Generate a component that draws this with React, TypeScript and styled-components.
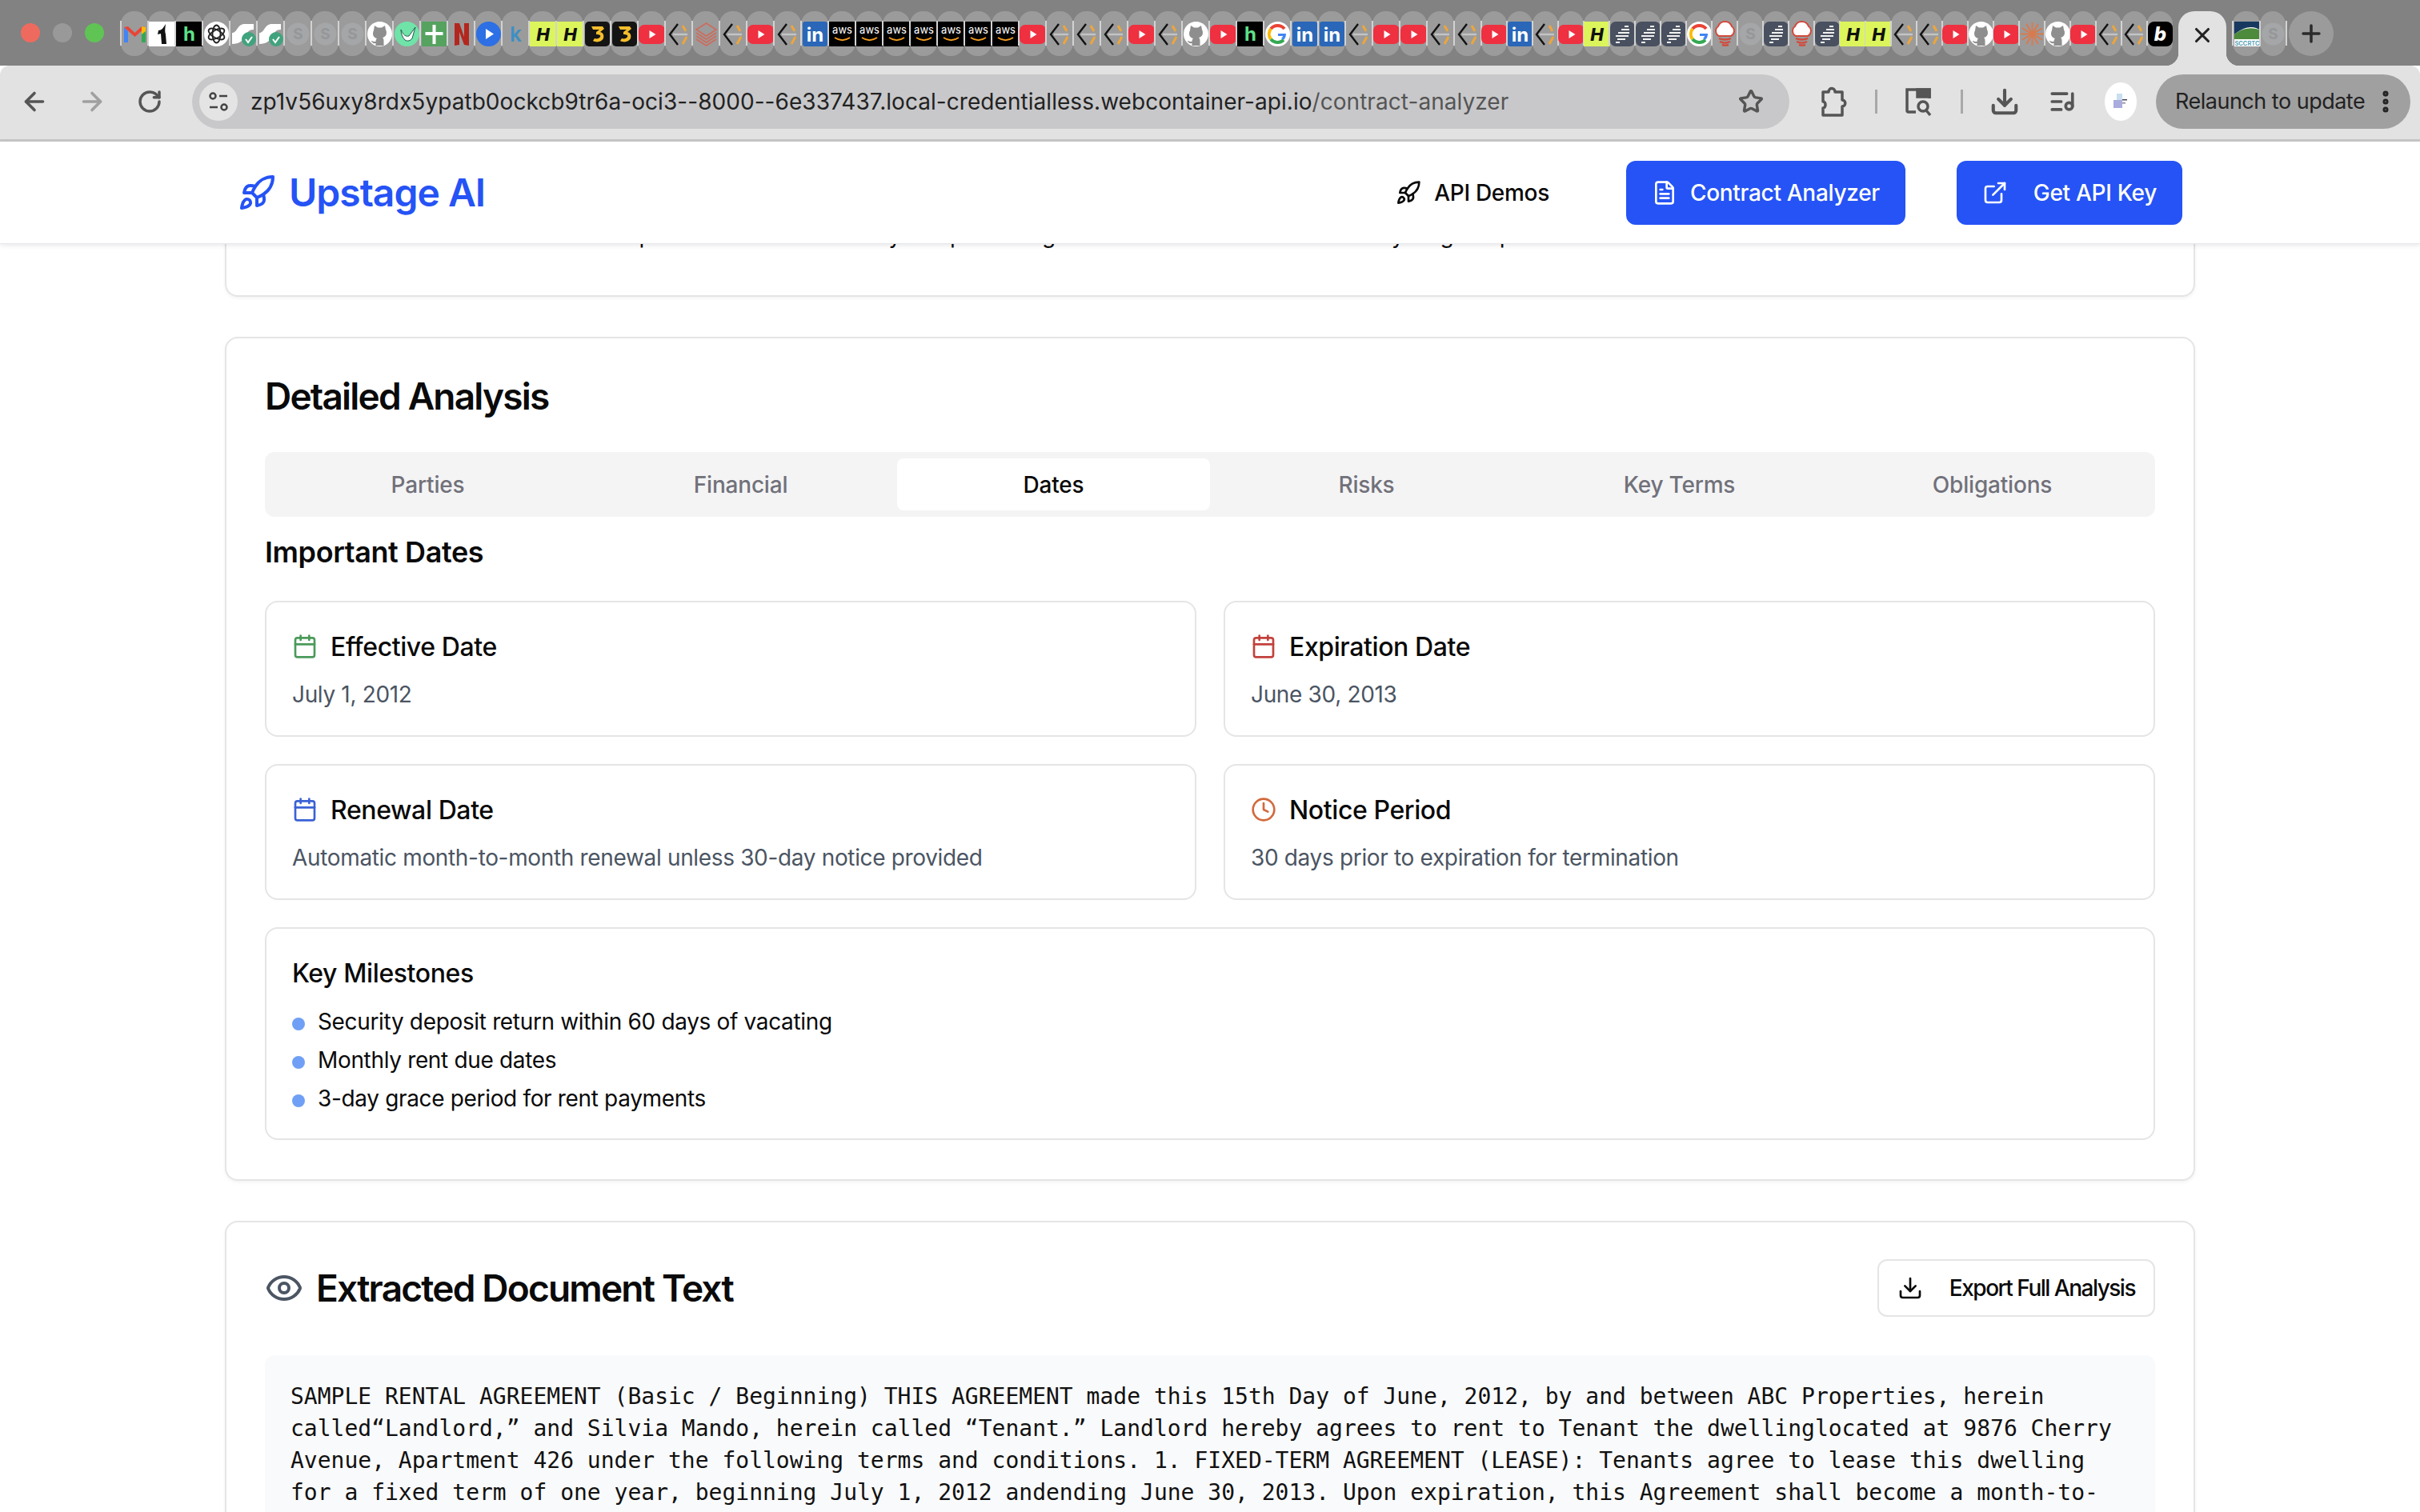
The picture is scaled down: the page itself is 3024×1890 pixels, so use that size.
import React from 'react';
import styled, { createGlobalStyle } from 'styled-components';
import { ArrowLeft, ArrowRight, Calendar, Clock, Download, ExternalLink, Eye, FileText, ListMusic, MoreVertical, Plus, Rocket, RotateCw, Star, X } from 'lucide-react';

const GlobalStyle = createGlobalStyle`
  html, body { margin: 0; padding: 0; background: #fff; }
  body { font-family: Inter, "Liberation Sans", sans-serif; color: #0a0a0a; }
  * { box-sizing: border-box; }
`;

const Page = styled.div`
  width: 3024px;
  height: 1890px;
  overflow: hidden;
`;

/* browser chrome */
const TabStrip = styled.div`
  height: 82px;
  background: #828282;
  display: flex;
  align-items: flex-start;
  padding-top: 14px;
`;

const Lights = styled.div`
  width: 151px;
  flex: none;
  display: flex;
  gap: 16px;
  padding: 15px 0 0 26px;
`;

const Light = styled.span<{ $c: string }>`
  width: 24px;
  height: 24px;
  border-radius: 50%;
  background: ${p => p.$c};
`;

const Slot = styled.div<{ $w: number }>`
  width: ${p => p.$w}px;
  height: 56px;
  flex: none;
  position: relative;
  background: #9b9b9b;
  border-radius: 16px;
  display: flex;
  align-items: center;
  justify-content: center;
  &::before {
    content: '';
    position: absolute;
    left: -1px;
    top: 12px;
    width: 2px;
    height: 31px;
    background: #d2d2d2;
  }
  svg { display: block; flex: none; overflow: visible; position: relative; }
`;

const ActiveTab = styled.div`
  width: 60px;
  height: 68px;
  flex: none;
  margin: 0 8px 0 7px;
  background: #e2e2e2;
  border-radius: 20px 20px 0 0;
  position: relative;
  display: flex;
  align-items: flex-start;
  justify-content: center;
  padding-top: 15px;
  color: #222;
  &::before, &::after {
    content: '';
    position: absolute;
    bottom: 0;
    width: 16px;
    height: 16px;
  }
  &::before { left: -16px; background: radial-gradient(circle at 0 0, transparent 16px, #e2e2e2 16.5px); }
  &::after { right: -16px; background: radial-gradient(circle at 100% 0, transparent 16px, #e2e2e2 16.5px); }
`;

const StripSep = styled.span`
  width: 2px;
  height: 31px;
  margin: 12px 2px 0 0;
  background: #d2d2d2;
  flex: none;
`;

const NewTab = styled.div`
  width: 56px;
  height: 56px;
  flex: none;
  border-radius: 50%;
  background: #9b9b9b;
  color: #2b2b2b;
  display: flex;
  align-items: center;
  justify-content: center;
`;

const Toolbar = styled.div`
  height: 95px;
  background: #e2e2e2;
  border-bottom: 3px solid #c6c6c6;
  border-radius: 12px 12px 0 0;
  display: flex;
  align-items: center;
  padding: 0 12px 3px 7px;
`;

const IconBtn = styled.div<{ $c?: string }>`
  width: 72px;
  height: 68px;
  flex: none;
  display: flex;
  align-items: center;
  justify-content: center;
  color: ${p => p.$c || '#555'};
`;

const Omnibox = styled.div`
  width: 1996px;
  height: 68px;
  flex: none;
  margin: 0 19px 0 17px;
  padding: 0 32px 0 9px;
  border-radius: 34px;
  background: #c8c8ca;
  display: flex;
  align-items: center;
  color: #555;
`;

const SiteChip = styled.div`
  width: 48px;
  height: 48px;
  flex: none;
  border-radius: 50%;
  background: #e4e4e4;
  display: flex;
  align-items: center;
  justify-content: center;
  margin-right: 16px;
`;

const Url = styled.div`
  flex: 1;
  font-size: 28px;
  letter-spacing: 0.05px;
  color: #222;
  white-space: nowrap;
  span { color: #555; }
`;

const ToolSep = styled.span`
  width: 3px;
  height: 30px;
  flex: none;
  margin: 0 16px;
  background: #a8a8a8;
`;

const Avatar = styled.div`
  width: 40px;
  height: 48px;
  flex: none;
  margin: 0 24px 0 17px;
  border-radius: 50%;
  background: #fff;
  display: flex;
  align-items: center;
  justify-content: center;
`;

const Relaunch = styled.div`
  width: 318px;
  height: 68px;
  flex: none;
  border-radius: 34px;
  background: #a0a0a0;
  color: #222;
  font-size: 27px;
  letter-spacing: -0.5px;
  display: flex;
  align-items: center;
  justify-content: space-between;
  padding: 0 14px 0 24px;
  white-space: nowrap;
`;

/* app nav */
const Nav = styled.header`
  height: 128px;
  position: relative;
  z-index: 5;
  background: #fff;
  border-bottom: 1px solid #e5e7eb;
  box-shadow: 0 2px 6px rgba(0, 0, 0, 0.09);
`;

const NavInner = styled.div`
  width: 2462px;
  height: 100%;
  margin: 0 auto;
  padding: 0 16px;
  display: flex;
  align-items: center;
  justify-content: space-between;
`;

const Brand = styled.div`
  display: flex;
  align-items: center;
  gap: 16px;
  font-size: 48px;
  font-weight: 600;
  color: #2553f5;
  letter-spacing: -1px;
`;

const NavLinks = styled.nav`
  display: flex;
  align-items: center;
  gap: 64px;
`;

const NavButton = styled.div<{ $primary?: boolean; $gap: number }>`
  height: 80px;
  padding: 0 32px;
  border-radius: 12px;
  display: flex;
  align-items: center;
  gap: ${p => p.$gap}px;
  font-size: 28px;
  font-weight: 500;
  letter-spacing: -0.3px;
  background: ${p => (p.$primary ? '#2553f5' : 'transparent')};
  color: ${p => (p.$primary ? '#fff' : '#0a0a0a')};
`;

/* page content */
const Main = styled.main`
  width: 2462px;
  margin: 0 auto;
  display: flex;
  flex-direction: column;
  gap: 50px;
`;

const Card = styled.section`
  background: #fff;
  border: 2px solid #e5e5e5;
  border-radius: 16px;
  padding: 46px 48px 49px;
  box-shadow: 0 2px 4px rgba(0, 0, 0, 0.05);
`;

const StubCard = styled(Card)`
  height: 110px;
  margin-top: -44px;
  border-top: none;
  border-radius: 0 0 16px 16px;
  padding: 0 48px;
  overflow: hidden;
`;

const StubText = styled.p`
  margin: 13px 0 0;
  font-size: 28px;
  line-height: 40px;
  letter-spacing: -0.3px;
  white-space: nowrap;
`;

const CardTitle = styled.h2`
  margin: 0;
  height: 52px;
  font-size: 46px;
  line-height: 52px;
  font-weight: 600;
  letter-spacing: -1.8px;
`;

const TabsList = styled.div`
  margin-top: 44px;
  height: 81px;
  padding: 8px;
  border-radius: 12px;
  background: #f4f4f5;
  display: grid;
  grid-template-columns: repeat(6, 1fr);
`;

const TabItem = styled.div<{ $active?: boolean }>`
  display: flex;
  align-items: center;
  justify-content: center;
  font-size: 28px;
  font-weight: 500;
  letter-spacing: -0.2px;
  border-radius: 8px;
  color: ${p => (p.$active ? '#0a0a0a' : '#71717a')};
  background: ${p => (p.$active ? '#fff' : 'transparent')};
`;

const SectionTitle = styled.h3`
  margin: 22px 0 39px;
  font-size: 36px;
  line-height: 44px;
  font-weight: 600;
  letter-spacing: -0.4px;
`;

const DateGrid = styled.div`
  display: grid;
  grid-template-columns: 1fr 1fr;
  gap: 34px;
`;

const InfoCard = styled.div`
  border: 2px solid #e5e5e5;
  border-radius: 16px;
  padding: 33px 32px 31px;
`;

const MilestoneCard = styled(InfoCard)`
  grid-column: 1 / -1;
  padding: 34px 32px 30px;
`;

const InfoHead = styled.div`
  display: flex;
  align-items: center;
  gap: 16px;
  height: 44px;
  font-size: 32px;
  font-weight: 500;
  letter-spacing: -0.4px;
`;

const InfoText = styled.p`
  margin: 18px 0 0;
  font-size: 28px;
  line-height: 40px;
  letter-spacing: -0.34px;
  color: #4b5563;
`;

const MilestoneTitle = styled.div`
  height: 44px;
  line-height: 44px;
  font-size: 32px;
  font-weight: 500;
  letter-spacing: -0.4px;
`;

const MilestoneList = styled.ul`
  margin: 18px 0 0;
  padding: 0;
  list-style: none;
  display: flex;
  flex-direction: column;
  gap: 8px;
`;

const Milestone = styled.li`
  display: flex;
  align-items: center;
  gap: 16px;
  height: 40px;
  font-size: 28px;
  letter-spacing: -0.34px;
  &::before {
    content: '';
    width: 16px;
    height: 16px;
    margin-top: 6px;
    border-radius: 50%;
    background: #70a0f5;
  }
`;

const ExtractHead = styled.div`
  display: flex;
  align-items: center;
  justify-content: space-between;
`;

const ExtractTitle = styled(CardTitle)`
  display: flex;
  align-items: center;
  gap: 16px;
  svg { color: #4b5563; }
`;

const ExportButton = styled.div`
  height: 72px;
  padding: 0 23px;
  border: 2px solid #e5e5e5;
  border-radius: 12px;
  display: flex;
  align-items: center;
  gap: 33px;
  font-size: 28px;
  font-weight: 500;
  letter-spacing: -1.5px;
`;

const DocBox = styled.div`
  margin-top: 48px;
  padding: 32px;
  border-radius: 12px;
  background: #f9fafb;
  font-family: "DejaVu Sans Mono", "Liberation Mono", monospace;
  font-size: 28px;
  line-height: 40px;
  white-space: pre-wrap;
  color: #111;
`;

type Kind = 'gmail' | 'fw' | 'hblack' | 'openai' | 'vue' | 'grayS' | 'github' | 'bird' | 'plus' | 'netflix' | 'play' | 'k' | 'H' | 'crown' | 'yt' | 'br' | 'layers' | 'in' | 'aws' | 'G' | 'stack' | 'chef' | 'burst' | 'b' | 'scc';

const repeat = (k: Kind, n: number): Kind[] => Array(n).fill(k);

const tabs: Kind[] = [
  'gmail', 'fw', 'hblack', 'openai', 'vue', 'vue', ...repeat('grayS', 3), 'github', 'bird', 'plus', 'netflix', 'play', 'k', 'H', 'H', 'crown', 'crown',
  'yt', 'br', 'layers', 'br', 'yt', 'br', 'in', ...repeat('aws', 7), 'yt', 'br', 'br', 'br', 'yt', 'br', 'github', 'yt', 'hblack', 'G', 'in', 'in',
  'br', 'yt', 'yt', 'br', 'br', 'yt', 'in', 'br', 'yt', 'H', ...repeat('stack', 3), 'G', 'chef', 'grayS', 'stack', 'chef', 'stack', 'H', 'H', 'br', 'br',
  'yt', 'github', 'yt', 'burst', 'github', 'yt', 'br', 'br', 'b',
];

const Favicon = ({ kind }: { kind: Kind }) => {
  const svg = (body: React.ReactNode) => <svg width="31" height="31" viewBox="0 0 31 31">{body}</svg>;
  switch (kind) {
    case 'gmail':
      return svg(<>
        <path d="M2 7v19h5V12z" fill="#4285f4" />
        <path d="M29 7v19h-5V12z" fill="#34a853" />
        <path d="M2 7l5-1 8.500 8L24 6l5 1-13.500 12z" fill="#ea4335" />
        <path d="M24 6l5 1v5l-5 4z" fill="#fbbc04" />
      </>);
    case 'fw':
      return svg(<>
        <rect x="-1" width="33" height="31" fill="#fff" />
        <path d="M20 3c-1 8-1 9 0 13l1 12h-6l-1-13-4 1 1-5c4 0 6-3 9-8z" fill="#111" />
      </>);
    case 'hblack':
      return svg(<>
        <rect x="-1" width="33" height="31" fill="#000" />
        <text x="15.500" y="24" textAnchor="middle" fontFamily="Inter" fontSize="24" fontWeight="700" fill="#5ee08a">h</text>
      </>);
    case 'openai':
      return svg(<>
        <circle cx="15.500" cy="15.500" r="15.500" fill="#fff" />
        <g fill="none" stroke="#222" strokeWidth="1.800">
          <ellipse cx="15.500" cy="15.500" rx="5" ry="11" />
          <ellipse cx="15.500" cy="15.500" rx="5" ry="11" transform="rotate(60 15.500 15.500)" />
          <ellipse cx="15.500" cy="15.500" rx="5" ry="11" transform="rotate(120 15.500 15.500)" />
        </g>
      </>);
    case 'vue':
      return svg(<>
        <path d="M1 28V14c7 0 6-11 16-11h11v7c-7 0-9 5-12 10-2 4-6 8-15 8z" fill="#fff" />
        <circle cx="22" cy="22" r="9" fill="#41a37e" />
        <path d="M18 22l3 4 5-7" fill="none" stroke="#fff" strokeWidth="2" />
      </>);
    case 'grayS':
      return svg(<>
        <circle cx="15.500" cy="15.500" r="14" fill="#a4a6a8" />
        <text x="15.500" y="22" textAnchor="middle" fontFamily="Inter" fontSize="19" fontWeight="700" fill="#959799">S</text>
      </>);
    case 'github':
      return svg(<>
        <circle cx="15.500" cy="15.500" r="15.500" fill="#fff" />
        <path d="M9 5l4 2.500h5L22 5l1 5c2 4 1 9-4 10 1 1 1.500 2 1.500 4v6h-10v-3c-3 .5-4.500-.5-6-3 2 0 3 1.500 6 1 0-2 .5-3 1.500-4-5-1-6-6-4-10z" fill="#8e8e8e" />
      </>);
    case 'bird':
      return svg(<>
        <circle cx="15.500" cy="15.500" r="15.500" fill="#6fe3a8" />
        <path d="M8 10c3 7 6 9 10 8l8-11-4 14c-2 3-6 4-9 2-3-3-5-8-5-13z" fill="#fff" stroke="#24574a" strokeWidth="1" />
      </>);
    case 'plus':
      return svg(<>
        <rect width="31" height="31" fill="#55a35f" />
        <path d="M13.500 4h4v9h9v4h-9v11h-4V17h-9v-4h9z" fill="#fff" />
      </>);
    case 'netflix':
      return svg(<path d="M7 2h6l6 17V2h6v28l-6-1-6-16v16l-6 1z" fill="#b3261e" />);
    case 'play':
      return svg(<>
        <circle cx="15.500" cy="15.500" r="15.500" fill="#2d6fe4" />
        <path d="M12 9l10 6.500L12 22z" fill="#fff" />
      </>);
    case 'k':
      return svg(<text x="15.500" y="25" textAnchor="middle" fontFamily="Inter" fontSize="26" fontWeight="600" fill="#3d8fc4">k</text>);
    case 'H':
      return svg(<>
        <rect x="-1" width="33" height="31" fill="#dcf55c" />
        <text x="15.500" y="24" textAnchor="middle" fontFamily="Inter" fontSize="22" fontWeight="800" fontStyle="italic" fill="#111">H</text>
      </>);
    case 'crown':
      return svg(<>
        <rect width="31" height="31" rx="5" fill="#141414" />
        <path d="M8 6h14l2 3-5 4c4 1 5 4 4 8-2 4-8 6-13 3l2-3c3 1 6 0 7-2s-1-3-5-3v-3l4-3H10z" fill="#f4be2c" />
      </>);
    case 'yt':
      return svg(<>
        <rect x="-1" y="4" width="33" height="24" rx="7" fill="#ee3040" />
        <path d="M12.500 11l8 5-8 5z" fill="#fff" />
      </>);
    case 'br':
      return svg(<>
        <path d="M14 3L4 16l10 13" fill="none" stroke="#111" strokeWidth="2.400" />
        <path d="M8 16h18" stroke="#c4c4c4" strokeWidth="2.400" />
        <path d="M20 5l4 7M25 19l-5 9" stroke="#eca63c" strokeWidth="3" fill="none" />
      </>);
    case 'layers':
      return svg(<g fill="none" stroke="#cf6a5a" strokeWidth="1.500">
        <path d="M15.500 2L28 10 15.500 18 3 10z" />
        <path d="M3 14l12.500 8L28 14" />
        <path d="M3 18l12.500 8L28 18" />
        <path d="M3 22l12.500 8L28 22" />
      </g>);
    case 'in':
      return svg(<>
        <rect width="31" height="31" rx="3" fill="#2a67b8" />
        <text x="15.500" y="25" textAnchor="middle" fontFamily="Inter" fontSize="24" fontWeight="700" fill="#fff">in</text>
      </>);
    case 'aws':
      return svg(<>
        <rect x="-1" width="33" height="31" fill="#000" />
        <text x="15.500" y="15" textAnchor="middle" fontFamily="Inter" fontSize="13" fill="#fff">aws</text>
        <path d="M6 20c6 4 13 4 19 0" fill="none" stroke="#f09a1f" strokeWidth="2" />
      </>);
    case 'G':
      return svg(<>
        <circle cx="15.500" cy="15.500" r="15.500" fill="#fff" />
        <path d="M24 9a11 11 0 0 0-17 0" fill="none" stroke="#ea4335" strokeWidth="4" />
        <path d="M7 9a11 11 0 0 0 0 13" fill="none" stroke="#fbbc04" strokeWidth="4" />
        <path d="M7 22a11 11 0 0 0 16 1" fill="none" stroke="#34a853" strokeWidth="4" />
        <path d="M16 15h10c0 3-1 6-3 8l-3-2c1-1 2-2 2-3h-6z" fill="#4285f4" />
      </>);
    case 'stack':
      return svg(<>
        <rect width="31" height="31" rx="7" fill="#49505f" />
        <path d="M18 6h5M14 10h10M10 14h14M7 18h16M9 22h10M7 26h5" stroke="#f2f2f2" strokeWidth="2" />
      </>);
    case 'chef':
      return svg(<>
        <path d="M8 18a7 7 0 0 1-1-12 9 9 0 0 1 17 0 7 7 0 0 1-1 12z" fill="#fff" stroke="#d24a3c" strokeWidth="2" />
        <path d="M8 21c5 2 10 2 15 0M9 25c4 2 9 2 13 0M12 29c3 1 5 1 8 0" fill="none" stroke="#d24a3c" strokeWidth="2.400" />
      </>);
    case 'burst':
      return svg(<g stroke="#d97a4f" strokeWidth="2">
        {[0, 30, 60, 90, 120, 150].map(a => <line key={a} x1="15.500" y1="1" x2="15.500" y2="30" transform={`rotate(${a} 15.500 15.500)`} />)}
      </g>);
    case 'b':
      return svg(<>
        <rect width="31" height="31" rx="8" fill="#000" />
        <text x="15.500" y="24" textAnchor="middle" fontFamily="Inter" fontSize="24" fontWeight="800" fontStyle="italic" fill="#fff">b</text>
      </>);
    case 'scc':
      return svg(<>
        <rect width="33" height="31" fill="#fff" />
        <path d="M0 0h33v11C22 3 10 8 0 16z" fill="#17395f" />
        <path d="M0 16c10-8 22-10 33-5v11H0z" fill="#4d8a3c" />
        <text x="16" y="30" textAnchor="middle" fontFamily="Inter" fontSize="7.500" fontWeight="600" fill="#4a9ab5">SCCRTC</text>
      </>);
  }
};

const PuzzleIcon = () => (
  <svg width="36" height="40" viewBox="0 0 36 40" fill="none" stroke="#555" strokeWidth="3.500" strokeLinejoin="round">
    <path d="M5 8h7c0-6 8-6 8 0h9v10c5 0 5 8 0 8v11H5V28c4 0 4-8 0-8z" />
  </svg>
);

const TabSearchIcon = () => (
  <svg width="36" height="40" viewBox="0 0 36 40" fill="none" stroke="#555" strokeWidth="3.500">
    <path d="M14 33H5a2 2 0 0 1-2-2V5h28v11" />
    <path d="M16 5h15v9H16z" fill="#555" />
    <circle cx="23" cy="26" r="6" />
    <path d="M27 31l5 6" />
  </svg>
);

const SiteIcon = () => (
  <svg width="26" height="28" viewBox="0 0 26 28" fill="none" stroke="#444" strokeWidth="2.500">
    <circle cx="6" cy="7" r="3.500" />
    <path d="M14 7h10M2 21h10" />
    <circle cx="20" cy="21" r="3.500" />
  </svg>
);

const Logo = () => (
  <svg width="20" height="26" viewBox="0 0 20 26">
    <rect x="5" y="3" width="7" height="9" fill="#c9dff0" />
    <rect x="1" y="11" width="11" height="10" fill="#a9acdc" />
    <rect x="12" y="10" width="6" height="1.500" fill="#445" />
    <rect x="12" y="14" width="4" height="1.500" fill="#889" />
  </svg>
);

const text = `SAMPLE RENTAL AGREEMENT (Basic / Beginning) THIS AGREEMENT made this 15th Day of June, 2012, by and between ABC Properties, herein called“Landlord,” and Silvia Mando, herein called “Tenant.” Landlord hereby agrees to rent to Tenant the dwellinglocated at 9876 Cherry Avenue, Apartment 426 under the following terms and conditions. 1. FIXED-TERM AGREEMENT (LEASE): Tenants agree to lease this dwelling for a fixed term of one year, beginning July 1, 2012 andending June 30, 2013. Upon expiration, this Agreement shall become a month-to-month tenancy.`;

const App = () => {
  return (
    <Page>
      <GlobalStyle />
      <TabStrip>
        <Lights>
          <Light $c="#ef6a5e" />
          <Light $c="#999999" />
          <Light $c="#5fc454" />
        </Lights>
        {tabs.map((kind, i) => (
          <Slot key={i} $w={i < 50 ? 34 : 32}><Favicon kind={kind} /></Slot>
        ))}
        <ActiveTab><X size={30} strokeWidth={2.5} /></ActiveTab>
        <Slot $w={34}><Favicon kind="scc" /></Slot>
        <Slot $w={32}><Favicon kind="grayS" /></Slot>
        <StripSep />
        <NewTab><Plus size={34} strokeWidth={2.5} /></NewTab>
      </TabStrip>
      <Toolbar>
        <IconBtn><ArrowLeft size={36} strokeWidth={2.4} /></IconBtn>
        <IconBtn $c="#a0a0a0"><ArrowRight size={36} strokeWidth={2.4} /></IconBtn>
        <IconBtn><RotateCw size={32} strokeWidth={2.6} /></IconBtn>
        <Omnibox>
          <SiteChip><SiteIcon /></SiteChip>
          <Url>zp1v56uxy8rdx5ypatb0ockcb9tr6a-oci3--8000--6e337437.local-credentialless.webcontainer-api.io<span>/contract-analyzer</span></Url>
          <Star size={32} strokeWidth={2.6} />
        </Omnibox>
        <IconBtn><PuzzleIcon /></IconBtn>
        <ToolSep />
        <IconBtn><TabSearchIcon /></IconBtn>
        <ToolSep />
        <IconBtn><Download size={38} strokeWidth={2.6} /></IconBtn>
        <IconBtn><ListMusic size={34} strokeWidth={2.6} /></IconBtn>
        <Avatar><Logo /></Avatar>
        <Relaunch>Relaunch to update<MoreVertical size={34} strokeWidth={3} /></Relaunch>
      </Toolbar>
      <Nav>
        <NavInner>
          <Brand><Rocket size={48} strokeWidth={2} />Upstage AI</Brand>
          <NavLinks>
            <NavButton $gap={16}><Rocket size={32} strokeWidth={2} />API Demos</NavButton>
            <NavButton $primary $gap={16}><FileText size={32} strokeWidth={2} />Contract Analyzer</NavButton>
            <NavButton $primary $gap={32}><ExternalLink size={32} strokeWidth={2} />Get API Key</NavButton>
          </NavLinks>
        </NavInner>
      </Nav>
      <Main>
        <StubCard>
          <StubText>The contract is balanced and it also protects all its sides fairly has per the agreed terms. And these rules really as good plan for both sides in all the matters.</StubText>
        </StubCard>
        <Card>
          <CardTitle>Detailed Analysis</CardTitle>
          <TabsList>
            <TabItem>Parties</TabItem>
            <TabItem>Financial</TabItem>
            <TabItem $active>Dates</TabItem>
            <TabItem>Risks</TabItem>
            <TabItem>Key Terms</TabItem>
            <TabItem>Obligations</TabItem>
          </TabsList>
          <SectionTitle>Important Dates</SectionTitle>
          <DateGrid>
            <InfoCard>
              <InfoHead><Calendar size={32} color="#4b9a5a" />Effective Date</InfoHead>
              <InfoText>July 1, 2012</InfoText>
            </InfoCard>
            <InfoCard>
              <InfoHead><Calendar size={32} color="#c2423c" />Expiration Date</InfoHead>
              <InfoText>June 30, 2013</InfoText>
            </InfoCard>
            <InfoCard>
              <InfoHead><Calendar size={32} color="#3b62d6" />Renewal Date</InfoHead>
              <InfoText>Automatic month-to-month renewal unless 30-day notice provided</InfoText>
            </InfoCard>
            <InfoCard>
              <InfoHead><Clock size={32} color="#d2693c" />Notice Period</InfoHead>
              <InfoText>30 days prior to expiration for termination</InfoText>
            </InfoCard>
            <MilestoneCard>
              <MilestoneTitle>Key Milestones</MilestoneTitle>
              <MilestoneList>
                <Milestone>Security deposit return within 60 days of vacating</Milestone>
                <Milestone>Monthly rent due dates</Milestone>
                <Milestone>3-day grace period for rent payments</Milestone>
              </MilestoneList>
            </MilestoneCard>
          </DateGrid>
        </Card>
        <Card>
          <ExtractHead>
            <ExtractTitle><Eye size={48} strokeWidth={2} />Extracted Document Text</ExtractTitle>
            <ExportButton><Download size={32} strokeWidth={2} />Export Full Analysis</ExportButton>
          </ExtractHead>
          <DocBox>{text}</DocBox>
        </Card>
      </Main>
    </Page>
  );
};

export default App;
